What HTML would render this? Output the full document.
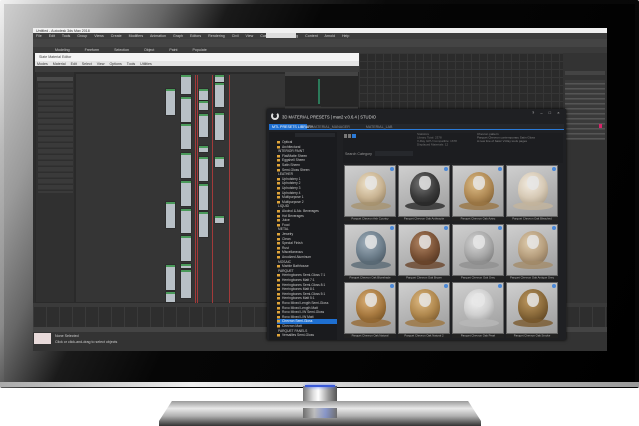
<!DOCTYPE html>
<html><head><meta charset="utf-8"><style>
*{margin:0;padding:0;box-sizing:border-box}
body{width:639px;height:426px;background:#fff;position:relative;overflow:hidden;font-family:"Liberation Sans",sans-serif}
.a{position:absolute}
.t{position:absolute;font-size:7.2px;color:#cfcfcf;white-space:nowrap;line-height:8px;transform:scale(.5);transform-origin:0 0}
.n{position:absolute;background:#b8c0c6;border-top:2px solid #4a9a5a;box-shadow:0 0 0 0.5px #222}
.r{position:absolute;width:1px;background:#a33a3a;top:75px;height:228px}
.tr{position:absolute;left:277px;font-size:6.6px;color:#c8c8c8;white-space:nowrap;height:9.2px;line-height:9.2px;transform:scale(.5);transform-origin:0 0}
.tr:before{content:"";display:inline-block;width:6px;height:5px;background:#e0a53a;margin-right:4px;vertical-align:middle}
.tr.h:before{background:none;width:4px}
.c{position:absolute;width:52px;height:52px;background:linear-gradient(160deg,#cfcfcf,#9c9c9c);border:0.5px solid #666;overflow:hidden}
.c i{position:absolute;left:11px;top:6px;width:30px;height:34px;border-radius:50% 50% 45% 45%}
.c b{position:absolute;left:20px;top:10px;width:12px;height:14px;background:#e6e6e6;border-radius:40% 40% 50% 50%;opacity:.85}
.c u{position:absolute;left:6px;top:36px;width:40px;height:8px;border-radius:50%;opacity:.8}
.c s{position:absolute;right:1px;top:1px;width:4px;height:4px;border-radius:50%;background:#4a88d8}
.l{position:absolute;width:104px;height:8px;background:#222;font-size:5.6px;color:#bbb;text-align:center;line-height:8px;white-space:nowrap;overflow:hidden;transform:scale(.5);transform-origin:0 0}
</style></head><body>
<!-- monitor frame -->
<div class="a" style="left:0;top:0;width:639px;height:388px;background:linear-gradient(120deg,#f2f2f2 0%,#b9b9b9 10%,#8a8a8a 22%,#2a2a2a 30%,#0a0a0a 45%,#050505 100%);border-radius:2px"></div>
<div class="a" style="left:4px;top:4px;width:631px;height:378px;background:linear-gradient(115deg,#cfcfcf 0%,#9a9a9a 12%,#666 20%,#1a1a1a 28%,#060606 40%,#000 100%)"></div>
<div class="a" style="left:0;top:382px;width:639px;height:5px;background:linear-gradient(90deg,#aaa,#eee 30%,#ccc 60%,#999)"></div>
<!-- stand -->
<div class="a" style="left:303px;top:386px;width:34px;height:22px;background:linear-gradient(90deg,#777,#ddd 30%,#fff 45%,#999 75%,#555)"></div>
<div class="a" style="left:305px;top:385px;width:30px;height:2px;background:#3a5ad8;box-shadow:0 0 3px #4a6cff"></div>
<div class="a" style="left:159px;top:401px;width:322px;height:25px;background:linear-gradient(180deg,#9a9a9a,#e8e8e8 30%,#b0b0b0 60%,#333);clip-path:polygon(4% 0,96% 0,100% 80%,100% 100%,0 100%,0 80%)"></div>
<div class="a" style="left:303px;top:408px;width:34px;height:10px;background:linear-gradient(90deg,#666,#bbb,#8090c8,#666);opacity:.9"></div>
<!-- screen -->
<div class="a" style="left:33px;top:28px;width:574px;height:323px;background:#2d2d2d;overflow:hidden">
 <div class="a" style="left:0;top:0;width:574px;height:5px;background:#f0f0f0"></div>
 <div class="t" style="left:3px;top:0.5px;color:#333">Untitled - Autodesk 3ds Max 2018</div>
 <div class="a" style="left:0;top:5px;width:574px;height:6px;background:#3d3d3d"></div>
 <div class="t" style="left:3px;top:6px;word-spacing:12px">File Edit Tools Group Views Create Modifiers Animation Graph Editors Rendering Civil View Customize Scripting Content Arnold Help</div>
 <div class="a" style="left:233px;top:5px;width:30px;height:5px;background:#ddd"></div>
 <div class="a" style="left:0;top:11px;width:574px;height:8px;background:#444"></div>
 <div class="a" style="left:0;top:19px;width:574px;height:6px;background:#3a3a3a"></div>
 <div class="t" style="left:22px;top:20px;word-spacing:28px">Modeling Freeform Selection Object Paint Populate</div>
 <!-- viewport -->
 <div class="a" style="left:326px;top:25px;width:204px;height:250px;background-color:#2b2b2b;background-image:linear-gradient(#363636 1px,transparent 1px),linear-gradient(90deg,#363636 1px,transparent 1px);background-size:8px 8px"></div>
 <div class="a" style="left:311px;top:60px;width:5px;height:6px;background:#888"></div>
 <!-- command panel -->
 <div class="a" style="left:530px;top:25px;width:44px;height:298px;background:#333"></div>
 <div class="a" style="left:532px;top:43px;width:40px;height:4px;background:#444"></div>
 <div class="a" style="left:532px;top:52px;width:40px;height:60px;background:repeating-linear-gradient(#3a3a3a 0 3px,#555 3px 4.5px,#3a3a3a 4.5px 5px)"></div>
 <div class="a" style="left:566px;top:96px;width:3px;height:4px;background:#d8246a"></div>
 <!-- material editor -->
 <div class="a" style="left:2px;top:25px;width:324px;height:250px;background:#2a2a2a">
  <div class="a" style="left:0;top:0;width:324px;height:8px;background:#f4f4f4"></div>
  <div class="t" style="left:4px;top:2px;color:#444">Slate Material Editor</div>
  <div class="a" style="left:0;top:8px;width:324px;height:5px;background:#e4e4e4"></div>
  <div class="t" style="left:2px;top:8.5px;color:#333;word-spacing:8px">Modes Material Edit Select View Options Tools Utilities</div>
  <div class="a" style="left:0;top:13px;width:324px;height:6px;background:#3c3c3c"></div>
  <div class="a" style="left:1px;top:19px;width:38px;height:230px;background:#303030"></div>
  <div class="a" style="left:2px;top:24px;width:36px;height:4px;background:#4a4a4a"></div>
  <div class="a" style="left:3px;top:30px;width:35px;height:110px;background:repeating-linear-gradient(#3a3a3a 0 4.5px,#2e2e2e 4.5px 6px)"></div>
  <div class="a" style="left:41px;top:21px;width:245px;height:228px;background:#353535"></div>
  <div class="a" style="left:250px;top:19px;width:73px;height:4px;background:#444"></div>
  <div class="a" style="left:250px;top:23px;width:73px;height:30px;background:#262626"></div>
  <div class="a" style="left:283px;top:26px;width:2px;height:25px;background:#2c7a5a"></div>
  <div class="a" style="left:250px;top:54px;width:73px;height:3px;background:#444"></div>
  <div class="a" style="left:250px;top:57px;width:73px;height:192px;background:#303030"></div>
 </div>
 <!-- nodes -->
 <div style="position:absolute;left:-33px;top:-28px">
  <div class="r" style="left:195px"></div><div class="r" style="left:197px"></div><div class="r" style="left:212px"></div><div class="r" style="left:229px"></div>
  <div class="n" style="left:181px;top:75px;width:10px;height:19px"></div>
  <div class="n" style="left:181px;top:97px;width:10px;height:25px"></div>
  <div class="n" style="left:181px;top:124px;width:10px;height:25px"></div>
  <div class="n" style="left:181px;top:153px;width:10px;height:25px"></div>
  <div class="n" style="left:181px;top:181px;width:10px;height:25px"></div>
  <div class="n" style="left:181px;top:209px;width:10px;height:24px"></div>
  <div class="n" style="left:181px;top:236px;width:10px;height:25px"></div>
  <div class="n" style="left:181px;top:264px;width:10px;height:4px"></div>
  <div class="n" style="left:181px;top:270px;width:10px;height:28px"></div>
  <div class="n" style="left:166px;top:89px;width:9px;height:26px"></div>
  <div class="n" style="left:166px;top:202px;width:9px;height:26px"></div>
  <div class="n" style="left:166px;top:265px;width:9px;height:25px"></div>
  <div class="n" style="left:166px;top:292px;width:9px;height:10px"></div>
  <div class="n" style="left:199px;top:89px;width:9px;height:11px"></div>
  <div class="n" style="left:199px;top:101px;width:9px;height:9px"></div>
  <div class="n" style="left:199px;top:114px;width:9px;height:23px"></div>
  <div class="n" style="left:199px;top:146px;width:9px;height:6px"></div>
  <div class="n" style="left:199px;top:157px;width:9px;height:24px"></div>
  <div class="n" style="left:199px;top:184px;width:9px;height:26px"></div>
  <div class="n" style="left:199px;top:212px;width:9px;height:25px"></div>
  <div class="n" style="left:215px;top:75px;width:9px;height:7px"></div>
  <div class="n" style="left:215px;top:83px;width:9px;height:24px"></div>
  <div class="n" style="left:215px;top:113px;width:9px;height:27px"></div>
  <div class="n" style="left:215px;top:157px;width:9px;height:10px"></div>
  <div class="n" style="left:215px;top:216px;width:9px;height:7px"></div>
 </div>
 <!-- timeline / status -->
 <div class="a" style="left:0;top:275px;width:574px;height:4px;background:#3a3a3a"></div>
 <div class="a" style="left:0;top:279px;width:574px;height:20px;background:#2e2e2e;background-image:linear-gradient(90deg,#3a3a3a 1px,transparent 1px);background-size:13px 20px"></div>
 <div class="a" style="left:0;top:299px;width:574px;height:5px;background:#444"></div>
 <div class="a" style="left:0;top:304px;width:574px;height:19px;background:#333"></div>
 <div class="a" style="left:1px;top:305px;width:17px;height:11px;background:#e8dada"></div>
 <div class="t" style="left:22px;top:306px">None Selected</div>
 <div class="t" style="left:22px;top:312px">Click or click-and-drag to select objects</div>
 <div class="a" style="left:0;top:323px;width:574px;height:1px;background:#222"></div>
</div>
<!-- material presets dialog -->
<div class="a" style="left:267px;top:109px;width:299px;height:231px;background:#1f2023;box-shadow:0 0 3px #000">
 <div class="a" style="left:4px;top:3px;width:8px;height:8px;border-radius:50%;border:2px solid #ddd;border-top-color:transparent"></div>
 <div class="t" style="left:15px;top:6px;font-size:8.4px;color:#ddd">3D MATERIAL PRESETS | max2 v.0.6.4 | STUDIO</div>
 <div class="t" style="left:265px;top:2px;font-size:8px;word-spacing:10px">? – □ ×</div>
 <div class="a" style="left:2px;top:15px;width:295px;height:6px;background:#25272b;border-bottom:0.7px solid #2a7ad8"></div>
 <div class="a" style="left:2px;top:15px;width:38px;height:6px;background:#1e6fd0"></div>
 <div class="t" style="left:5px;top:16px;color:#fff">MTL PRESETS LIBRARY</div>
 <div class="t" style="left:45px;top:16px;color:#888;word-spacing:30px">MATERIAL_MANAGER MATERIAL_LAB</div>
 <div class="a" style="left:2px;top:23px;width:68px;height:208px;background:#1a1b1e"></div>
 <div class="a" style="left:28px;top:24px;width:40px;height:4px;background:#26282c"></div>
 <div class="a" style="left:76px;top:24px;width:220px;height:30px;background:#1c1d20"></div>
 <div class="a" style="left:77px;top:25px;width:3px;height:4px;background:#777"></div>
 <div class="a" style="left:81px;top:25px;width:3px;height:4px;background:#777"></div>
 <div class="a" style="left:85px;top:25px;width:4px;height:4px;background:#2a7ad8"></div>
 <div class="t" style="left:150px;top:24px;color:#777;font-size:6px;line-height:7px">Statistics<br>Library Total: 2378<br>V-Ray GPU Compatible: 1678<br>Displayed Materials: 12</div>
 <div class="t" style="left:210px;top:24px;color:#888;font-size:6px;line-height:7px">Chevron pattern<br>Parquet Chevron contemporary Satin Gloss<br>A new line of basic V-Ray tools pages</div>
 <div class="t" style="left:78px;top:43px;color:#999">Search Category</div>
 <div class="a" style="left:108px;top:42px;width:38px;height:5px;background:#26282c"></div>
</div>
<!-- tree -->
<div class="tr" style="top:140px">Optical</div><div class="tr" style="top:144.6px">Architectural</div>
<div class="tr h" style="top:149.2px;left:274px">INTERIOR PAINT</div>
<div class="tr" style="top:153.8px">Flat/Matte Sheen</div><div class="tr" style="top:158.4px">Eggshell Sheen</div><div class="tr" style="top:163px">Satin Sheen</div><div class="tr" style="top:167.6px">Semi-Gloss Sheen</div>
<div class="tr h" style="top:172.2px;left:274px">LEATHER</div>
<div class="tr" style="top:176.8px">Upholstery 1</div><div class="tr" style="top:181.4px">Upholstery 2</div><div class="tr" style="top:186px">Upholstery 3</div><div class="tr" style="top:190.6px">Upholstery 4</div><div class="tr" style="top:195.2px">Multipurpose 1</div><div class="tr" style="top:199.8px">Multipurpose 2</div>
<div class="tr h" style="top:204.4px;left:274px">LIQUID</div>
<div class="tr" style="top:209px">Alcohol &amp; Alc. Beverages</div><div class="tr" style="top:213.6px">Hot Beverages</div><div class="tr" style="top:218.2px">Juice</div><div class="tr" style="top:222.8px">Food</div>
<div class="tr h" style="top:227.4px;left:274px">METAL</div>
<div class="tr" style="top:232px">Jewelry</div><div class="tr" style="top:236.6px">Clean</div><div class="tr" style="top:241.2px">Special Finish</div><div class="tr" style="top:245.8px">Rust</div><div class="tr" style="top:250.4px">Miscellaneous</div><div class="tr" style="top:255px">Anodized Aluminum</div>
<div class="tr h" style="top:259.6px;left:274px">MOSAIC</div>
<div class="tr" style="top:264.2px">Marble Bathhouse</div>
<div class="tr h" style="top:268.8px;left:274px">PARQUET</div>
<div class="tr" style="top:273.4px">Herringbones Semi-Gloss 7:1</div><div class="tr" style="top:278px">Herringbones Matt 7:1</div><div class="tr" style="top:282.6px">Herringbones Semi-Gloss 8:1</div><div class="tr" style="top:287.2px">Herringbones Matt 8:1</div><div class="tr" style="top:291.8px">Herringbones Semi-Gloss 5:1</div><div class="tr" style="top:296.4px">Herringbones Matt 5:1</div><div class="tr" style="top:301px">Rovo Mixed Length Semi-Gloss</div><div class="tr" style="top:305.6px">Rovo Mixed Length Matt</div><div class="tr" style="top:310.2px">Rovo Mixed L/W Semi-Gloss</div><div class="tr" style="top:314.8px">Rovo Mixed L/W Matt</div>
<div class="a" style="left:277px;top:319.4px;width:60px;height:4.6px;background:#1e6fd0"></div>
<div class="tr" style="top:319.4px;color:#fff">Chevron Semi-Gloss</div><div class="tr" style="top:324px">Chevron Matt</div>
<div class="tr h" style="top:328.6px;left:274px">PARQUET PANELS</div>
<div class="tr" style="top:333.2px">Versailles Semi-Gloss</div>
<!-- thumbnails -->
<div class="c" style="left:344px;top:165px"><i style="background:radial-gradient(circle at 40% 35%,#f0e4cc,#c9b493 50%,#7d6a4c)"></i><u style="background:#a8946f"></u><b></b><s></s></div>
<div class="c" style="left:398px;top:165px"><i style="background:radial-gradient(circle at 40% 35%,#777,#3a3a3a 50%,#151515)"></i><u style="background:#2a2a2a"></u><b></b><s></s></div>
<div class="c" style="left:452px;top:165px"><i style="background:radial-gradient(circle at 40% 35%,#e0c08a,#b08a55 50%,#6a4c24)"></i><u style="background:#9a7644"></u><b></b><s></s></div>
<div class="c" style="left:506px;top:165px"><i style="background:radial-gradient(circle at 40% 35%,#f4ede2,#d6c9b5 50%,#998a74)"></i><u style="background:#c4b59d"></u><b></b><s></s></div>
<div class="c" style="left:344px;top:224px"><i style="background:radial-gradient(circle at 40% 35%,#a5b3bf,#6e7f8c 50%,#3a4650)"></i><u style="background:#5a6a76"></u><b></b><s></s></div>
<div class="c" style="left:398px;top:224px"><i style="background:radial-gradient(circle at 40% 35%,#b48866,#7a5236 50%,#3e2616)"></i><u style="background:#6a452a"></u><b></b><s></s></div>
<div class="c" style="left:452px;top:224px"><i style="background:radial-gradient(circle at 40% 35%,#d8d8d8,#a8a8a8 50%,#666)"></i><u style="background:#909090"></u><b></b><s></s></div>
<div class="c" style="left:506px;top:224px"><i style="background:radial-gradient(circle at 40% 35%,#e2d0b2,#b79f7e 50%,#75604a)"></i><u style="background:#a48c6a"></u><b></b><s></s></div>
<div class="c" style="left:344px;top:282px"><i style="background:radial-gradient(circle at 40% 35%,#dcb27a,#a87a40 50%,#5e4018)"></i><u style="background:#966a34"></u><b></b><s></s></div>
<div class="c" style="left:398px;top:282px"><i style="background:radial-gradient(circle at 40% 35%,#e0bc86,#b0884e 50%,#654620)"></i><u style="background:#9c7640"></u><b></b><s></s></div>
<div class="c" style="left:452px;top:282px"><i style="background:radial-gradient(circle at 40% 35%,#f2f2f2,#cfcfcf 50%,#8a8a8a)"></i><u style="background:#b8b8b8"></u><b></b><s></s></div>
<div class="c" style="left:506px;top:282px"><i style="background:radial-gradient(circle at 40% 35%,#c09a62,#8a6a3a 50%,#4a3418)"></i><u style="background:#7a5a2e"></u><b></b><s></s></div>
<div class="l" style="left:344px;top:217px">Parquet Chevron Ash Country</div>
<div class="l" style="left:398px;top:217px">Parquet Chevron Oak Anthracite</div>
<div class="l" style="left:452px;top:217px">Parquet Chevron Oak Aztec</div>
<div class="l" style="left:506px;top:217px">Parquet Chevron Oak Bleached</div>
<div class="l" style="left:344px;top:276px">Parquet Chevron Oak Blueshade</div>
<div class="l" style="left:398px;top:276px">Parquet Chevron Oak Brown</div>
<div class="l" style="left:452px;top:276px">Parquet Chevron Oak Grey</div>
<div class="l" style="left:506px;top:276px">Parquet Chevron Oak Antique Grey</div>
<div class="l" style="left:344px;top:334px">Parquet Chevron Oak Natural</div>
<div class="l" style="left:398px;top:334px">Parquet Chevron Oak Natural 2</div>
<div class="l" style="left:452px;top:334px">Parquet Chevron Oak Pearl</div>
<div class="l" style="left:506px;top:334px">Parquet Chevron Oak Smoke</div>
</body></html>
